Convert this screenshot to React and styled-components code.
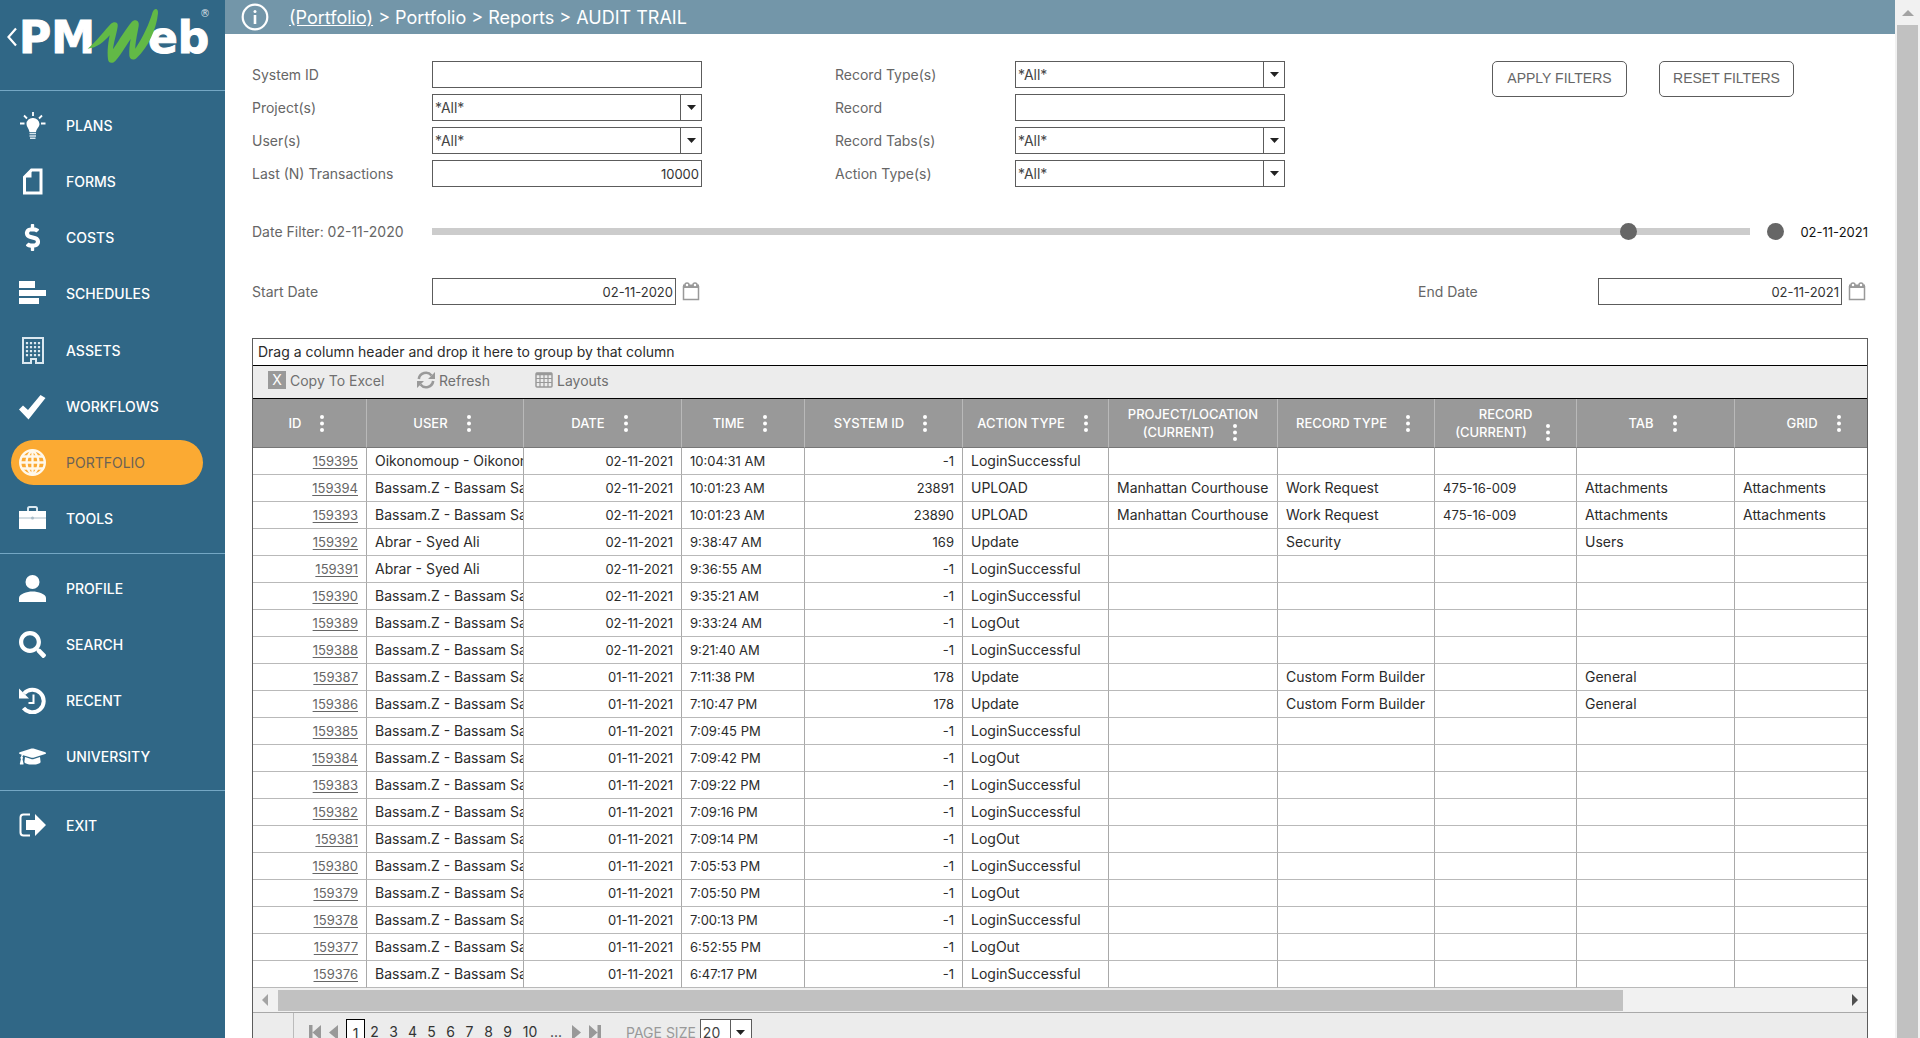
import React from "react";
import styled, { createGlobalStyle, css } from "styled-components";
import { FaDollarSign, FaSearch, FaGraduationCap } from "react-icons/fa";

const GlobalStyle = createGlobalStyle`
  *, *::before, *::after { box-sizing: border-box; }
  body {
    margin: 0;
    font-family: Inter, "Liberation Sans", sans-serif;
    font-size: 14px;
    color: #2b2b2b;
    background: #fff;
  }
  button, input, select { font: inherit; color: inherit; margin: 0; }
`;

/* ---------- shell ---------- */

const Shell = styled.div`
  display: flex;
  height: 100vh;
  overflow: hidden;
`;

const Sidebar = styled.aside`
  flex: 0 0 225px;
  background: #306786;
  color: #fff;
`;

const LogoLink = styled.a`
  display: flex;
  height: 90px;
`;

const NavGroup = styled.nav`
  display: grid;
  grid-auto-rows: 1fr;
  align-items: center;
  box-sizing: content-box;
  height: ${(p) => p.$height}px;
  padding: 6px 22px 6px 11px;
  border-top: 1px solid #74a7c4;
`;

const NavLink = styled.a`
  display: flex;
  align-items: center;
  gap: 20px;
  height: 45px;
  padding-left: 8px;
  border-radius: 23px;
  color: #fff;
  font-weight: 500;
  text-decoration: none;
  ${(p) =>
    p.$active &&
    css`
      background: #fbaa33;
      color: #6b6256;
      font-weight: 400;
    `}
  svg {
    width: 27px;
    height: 27px;
  }
`;

const Main = styled.main`
  flex: 1;
  min-width: 0;
  display: flex;
  flex-direction: column;
`;

const TitleBar = styled.header`
  flex: 0 0 34px;
  display: flex;
  align-items: center;
  gap: 20px;
  padding-left: 16px;
  background: #7396a9;
  color: #fff;
  font-size: 18px;
  a { color: inherit; }
`;

const Trail = styled.span`
  white-space: pre;
`;

const Content = styled.div`
  flex: 1;
  min-height: 0;
  padding: 27px 27px 0;
`;

const PageScroll = styled.div`
  flex: 0 0 25px;
  display: flex;
  flex-direction: column;
  align-items: center;
  background: #f1f1f1;
  svg { flex: 0 0 25px; width: 12px; }
`;

const PageThumb = styled.div`
  flex: 1;
  width: 21px;
  background: #c1c1c1;
`;

/* ---------- filters ---------- */

const Filters = styled.form`
  color: #666;
`;

const FilterGrid = styled.div`
  display: grid;
  grid-template-columns: minmax(0, 583px) minmax(0, 583px) 1fr;
`;

const FieldColumn = styled.div`
  display: grid;
  gap: 6px;
  align-content: start;
`;

const Field = styled.div`
  display: grid;
  grid-template-columns: 180px 270px;
  align-items: center;
`;

const boxed = css`
  height: 27px;
  border: 1px solid #5c5c5c;
  background: #fff;
`;

const TextInput = styled.input`
  ${boxed}
  width: 100%;
  min-width: 0;
  padding: 0 2px;
  outline: 0;
  border-radius: 0;
  color: #333;
  font-size: 13px;
  text-align: ${(p) => (p.$right ? "right" : "left")};
`;

const SelectFrame = styled.div`
  ${boxed}
  display: flex;
  width: ${(p) => (p.$width ? p.$width + "px" : "100%")};
`;

const Select = styled.select`
  flex: 1;
  min-width: 0;
  appearance: none;
  border: 0;
  border-radius: 0;
  outline: 0;
  padding: 0 2px;
  background: transparent;
  color: #444;
`;

const SelectArrow = styled.span`
  flex: 0 0 21px;
  display: flex;
  align-items: center;
  justify-content: center;
  border-left: 1px solid #5c5c5c;
`;

const Actions = styled.div`
  display: flex;
  justify-content: flex-end;
  align-items: flex-start;
  gap: 32px;
  padding-right: 74px;
`;

const ActionButton = styled.button`
  width: 135px;
  height: 36px;
  padding: 0 0 2px;
  border: 1px solid #5c5c5c;
  border-radius: 5px;
  background: #fff;
  color: #666;
  font-family: "Liberation Sans", Arial, sans-serif;
  font-size: 14px;
  white-space: nowrap;
`;

const SliderRow = styled.div`
  display: flex;
  align-items: center;
  height: 27px;
  margin-top: 31px;
`;

const SliderLabel = styled.label`
  flex: 0 0 180px;
`;

const Range = styled.input`
  appearance: none;
  flex: ${(p) => (p.$end ? "0 0 17px" : "1")};
  min-width: 0;
  width: 17px;
  height: 17px;
  margin: 0;
  margin-left: ${(p) => (p.$end ? 17 : 0)}px;
  background: transparent;
  &::-webkit-slider-runnable-track {
    height: 7px;
    background: ${(p) => (p.$end ? "transparent" : "#ccc")};
  }
  &::-webkit-slider-thumb {
    appearance: none;
    width: 17px;
    height: 17px;
    margin-top: -5px;
    border-radius: 50%;
    background: #666;
  }
`;

const SliderEnd = styled.output`
  flex: 0 0 84px;
  text-align: right;
  font-size: 13px;
  color: #111;
`;

const DateGrid = styled(FilterGrid)`
  margin-top: 33px;
`;

const DateField = styled.div`
  display: grid;
  grid-template-columns: 180px 244px 24px;
  align-items: center;
`;

const IconButton = styled.button`
  display: flex;
  justify-content: flex-end;
  padding: 0;
  border: 0;
  background: none;
  svg { flex: none; }
`;

/* ---------- grid ---------- */

const GridPanel = styled.section`
  margin-top: 33px;
  border: 1px solid #5c5c5c;
`;

const GroupHint = styled.div`
  height: 27px;
  line-height: 26px;
  padding-left: 5px;
  border-bottom: 1px solid #000;
`;

const Toolbar = styled.div`
  display: flex;
  align-items: center;
  height: 33px;
  padding: 0 0 4px 15px;
  border-bottom: 1px solid #000;
  background: #ececec;
`;

const ToolButton = styled.button`
  display: flex;
  align-items: center;
  gap: 4px;
  min-width: ${(p) => p.$width}px;
  padding: 0;
  border: 0;
  background: none;
  color: #707070;
`;

const ExcelMark = styled.span`
  width: 18px;
  height: 18px;
  line-height: 18px;
  background: #999;
  color: #fff;
  font-size: 14px;
  text-align: center;
`;

const TableClip = styled.div`
  overflow: hidden;
`;

const Table = styled.table`
  width: 1646px;
  table-layout: fixed;
  border-collapse: separate;
  border-spacing: 0;
`;

const HeadCell = styled.th`
  height: 49px;
  padding: 0;
  border-right: 1px solid #b9b9b9;
  border-bottom: 1px solid #777;
  background: #999;
  color: #fff;
  font-size: 13px;
  line-height: 18px;
  font-weight: 500;
  text-align: center;
  white-space: nowrap;
`;

const MenuButton = styled.button`
  width: 16px;
  height: 18px;
  margin-left: 13px;
  padding: 0;
  border: 0;
  background: none;
  vertical-align: top;
  svg { display: block; margin: 1px auto 0; }
`;

const Cell = styled.td`
  height: 27px;
  padding: ${(p) => (p.$tight ? "0 0 0 8px" : "0 8px")};
  border-right: 1px solid #a9a9a9;
  border-bottom: 1px solid #b9b9b9;
  line-height: 20px;
  font-size: ${(p) => (p.$numeric ? 13 : 14)}px;
  overflow: hidden;
  white-space: nowrap;
  text-align: ${(p) => (p.$right ? "right" : "left")};
  a {
    color: #666;
    text-underline-offset: 2px;
  }
`;

const TableScroll = styled.div`
  display: flex;
  align-items: center;
  height: 25px;
  background: #f1f1f1;
  border-bottom: 1px solid #a9a9a9;
  svg { flex: 0 0 25px; height: 12px; }
`;

const ScrollLane = styled.div`
  flex: 1;
`;

const TableThumb = styled.div`
  width: 86%;
  height: 21px;
  background: #c1c1c1;
`;

const Pager = styled.div`
  display: flex;
  height: 40px;
  background: #ececec;
  color: #333;
`;

const PagerGutter = styled.div`
  flex: 0 0 41px;
  border-right: 1px solid #bbb;
`;

const PagerBody = styled.div`
  display: flex;
  align-items: center;
  padding: 0 0 2px 14px;
`;

const PagerStep = styled.button`
  display: flex;
  width: 19px;
  padding: 0;
  border: 0;
  background: none;
  svg { flex: none; }
`;

const PageLink = styled.a`
  min-width: ${(p) => (p.$wide ? 26 : 19)}px;
  height: 27px;
  line-height: 26px;
  text-align: center;
  text-decoration: none;
  color: #333;
  ${(p) =>
    p.$current &&
    css`
      border: 1px solid #000;
      background: #fff;
      line-height: 27px;
    `}
`;

const PageSizeLabel = styled.label`
  margin: 0 4px 0 19px;
  color: #999;
  font-size: 14px;
`;

/* ---------- drawings ---------- */

const Caret = () => (
  <svg width="9" height="5" viewBox="0 0 9 5" aria-hidden="true">
    <path d="M0 0h9L4.500 5z" fill="#222" />
  </svg>
);

const Kebab = () => (
  <svg width="4" height="17" viewBox="0 0 4 17" fill="#fff" aria-hidden="true">
    <circle cx="2" cy="2" r="2" />
    <circle cx="2" cy="8.500" r="2" />
    <circle cx="2" cy="15" r="2" />
  </svg>
);

const CalendarIcon = () => (
  <svg width="18" height="19" viewBox="0 0 18 19" aria-hidden="true">
    <path d="M1.500 4v13.500h15V4" fill="none" stroke="#999" strokeWidth="1.500" />
    <path d="M1 2.500h16V6H1z" fill="#999" />
    <circle cx="5" cy="3" r="2" fill="#fff" stroke="#999" strokeWidth="1.500" />
    <circle cx="13" cy="3" r="2" fill="#fff" stroke="#999" strokeWidth="1.500" />
  </svg>
);

const Logo = () => (
  <svg width="225" height="90" viewBox="0 0 225 90" role="img" aria-label="PMWeb">
    <path d="M16 28.500 8.500 37 16 45.500" fill="none" stroke="#fff" strokeWidth="2.200" />
    <g fill="#fff" fontFamily="DejaVu Sans, sans-serif" fontWeight="700">
      <g stroke="#fff" strokeWidth="1">
        <text x="19" y="53" fontSize="44">PM</text>
        <text x="148" y="53" fontSize="44">eb</text>
      </g>
      <text x="200" y="17" fontSize="10" fontWeight="400" opacity=".8">®</text>
    </g>
    <path
      transform="scale(.33333)"
      fill="#62b946"
      d="M263 146C290 124 315 90 332 72c10-9 24-6 21 8-5 28-12 48-14 68 20-30 40-64 56-82 10-10 24-4 21 12-5 28-10 52-10 68 24-36 42-76 52-110 5-12 17-13 16 4-4 46-30 104-64 134-10 9-21 4-22-7-1-16 1-34 4-50-18 26-32 52-46 66-9 9-21 7-22-5-3-26 1-52 5-72-18 20-38 38-66 40z"
    />
  </svg>
);

const BulbIcon = () => (
  <svg viewBox="0 0 27 27" fill="#fff" aria-hidden="true">
    <path d="M14 6a6 6 0 0 0-6.500 6c0 3 2.500 4.500 3 8h6.500c.5-3.500 3.500-5 3.500-8A6.300 6.300 0 0 0 14 6z" />
    <path d="M10.500 21.500h6.500M10.500 24h6.500M11 26.300h5.500" stroke="#d7e5ee" strokeWidth="1.500" />
    <path d="M14 0v4M5 3.500l3 3M23 3.500l-3 3M1 11.500h4.500M22 11.500h4.500" stroke="#fff" strokeWidth="1.800" />
  </svg>
);

const FormIcon = () => (
  <svg viewBox="0 0 27 27" aria-hidden="true">
    <path d="M12.500 2H22v23H5.500V9z" fill="none" stroke="#fff" strokeWidth="3" />
    <path d="M4 9.500 12.500 1v8.500z" fill="#fff" />
  </svg>
);

const ScheduleIcon = () => (
  <svg viewBox="0 0 27 27" fill="#fff" aria-hidden="true">
    <path d="M0 1h16v7H0zM0 10h27v6H0zM0 18h20v6H0z" />
  </svg>
);

const BuildingIcon = () => (
  <svg viewBox="0 0 27 27" aria-hidden="true">
    <path d="M4 1h20v25h-7v-4h-5v4H4z" fill="none" stroke="#dbe8f0" strokeWidth="2" />
    <path d="M8 5v15M12 5v15M16 5v15M20 5v15" stroke="#dbe8f0" strokeWidth="2.200" strokeDasharray="2.200 1.800" />
  </svg>
);

const CheckIcon = () => (
  <svg viewBox="0 0 27 27" fill="#fff" aria-hidden="true">
    <path d="M0 16.500 4 12.500l5 4.500L21.500 2l5 3L9.500 26.500z" />
  </svg>
);

const GlobeIcon = () => (
  <svg viewBox="0 0 27 27" fill="none" aria-hidden="true">
    <circle cx="13.500" cy="13.500" r="12.300" stroke="#fff8ea" strokeWidth="2.400" />
    <path
      d="M13.500 1v25M13.500 1c-8 7-8 18 0 25M13.500 1c8 7 8 18 0 25M1 13.500h25M3 7.500h21M3 19.500h21"
      stroke="#fff8ea"
      strokeWidth="2.300"
    />
  </svg>
);

const BriefcaseIcon = () => (
  <svg viewBox="0 0 27 27" aria-hidden="true">
    <path d="M9 6V3.500q0-1.500 1.500-1.500h6q1.500 0 1.500 1.500V6" fill="none" stroke="#dbe8f0" strokeWidth="2" />
    <path d="M0 6h27v18H0z" fill="#fff" />
    <path d="M0 13h27" stroke="#a9bcc8" strokeWidth="1" />
    <circle cx="13.500" cy="13" r="1.500" fill="#a9bcc8" />
  </svg>
);

const PersonIcon = () => (
  <svg viewBox="0 0 27 27" fill="#fff" aria-hidden="true">
    <circle cx="13.500" cy="7" r="7" />
    <path d="M0 27v-4c0-4 8-6.500 13.500-6.500S27 19 27 23v4z" />
  </svg>
);

const RecentIcon = () => (
  <svg viewBox="0 0 27 27" fill="none" stroke="#fff" aria-hidden="true">
    <path d="M5 6.500A11.300 11.300 0 1 1 4.500 21" strokeWidth="4" />
    <path d="M0 1.500v10h10z" fill="#fff" stroke="none" />
    <path d="M14.500 7.500V16H9.500" strokeWidth="2" />
  </svg>
);

const ExitIcon = () => (
  <svg viewBox="0 0 27 27" aria-hidden="true">
    <path d="M11 2.500H4.500Q1.500 2.500 1.500 5.500v15q0 3 3 3H11" fill="none" stroke="#fff" strokeWidth="2" />
    <path d="M7 8h9V2l11 11-11 11v-6H7z" fill="#fff" />
  </svg>
);

const InfoIcon = () => (
  <svg width="28" height="28" viewBox="0 0 28 28" fill="none" stroke="#fff" aria-hidden="true">
    <circle cx="14" cy="14" r="12.300" strokeWidth="2.200" />
    <path d="M14 12v9" strokeWidth="2.600" />
    <circle cx="14" cy="8.500" r="1.500" fill="#fff" stroke="none" />
  </svg>
);

const RefreshIcon = () => (
  <svg width="18" height="18" viewBox="0 0 18 18" aria-hidden="true">
    <path d="M1.800 8A7.200 7.200 0 0 1 14.500 4.500M16.200 10A7.200 7.200 0 0 1 3.500 13.500" fill="none" stroke="#999" strokeWidth="2.600" />
    <path d="M18 1v7h-7zM0 17v-7h7z" fill="#999" />
  </svg>
);

const LayoutIcon = () => (
  <svg width="18" height="16" viewBox="0 0 18 16" fill="none" stroke="#999" aria-hidden="true">
    <rect x="1" y="1" width="16" height="14" rx="1" strokeWidth="1.500" />
    <path d="M1 2h16" strokeWidth="2.500" />
    <path d="M1 6.500h16M1 10.500h16M5 2v13M9 2v13M13 2v13" strokeWidth="1.200" />
  </svg>
);

const StepIcon = ({ back, edge }) => (
  <svg width="14" height="15" viewBox="0 0 14 15" fill="#999" aria-hidden="true">
    <g transform={back ? "matrix(-1 0 0 1 14 0)" : undefined}>
      <path d={edge ? "M1 0l8.500 7.500L1 15zM9.500 0H13v15H9.500z" : "M3 0l9 7.500L3 15z"} />
    </g>
  </svg>
);

/* ---------- data ---------- */

const NAV = [
  {
    name: "Modules",
    height: 450,
    items: [
      ["PLANS", BulbIcon],
      ["FORMS", FormIcon],
      ["COSTS", FaDollarSign],
      ["SCHEDULES", ScheduleIcon],
      ["ASSETS", BuildingIcon],
      ["WORKFLOWS", CheckIcon],
      ["PORTFOLIO", GlobeIcon],
      ["TOOLS", BriefcaseIcon],
    ],
  },
  {
    name: "User",
    height: 224,
    items: [
      ["PROFILE", PersonIcon],
      ["SEARCH", FaSearch],
      ["RECENT", RecentIcon],
      ["UNIVERSITY", FaGraduationCap],
    ],
  },
  { name: "Session", height: 56, items: [["EXIT", ExitIcon]] },
];

const LEFT_FIELDS = [
  { id: "system-id", label: "System ID" },
  { id: "projects", label: "Project(s)", select: true },
  { id: "users", label: "User(s)", select: true },
  { id: "last-n", label: "Last (N) Transactions", value: "10000", right: true },
];

const RIGHT_FIELDS = [
  { id: "record-types", label: "Record Type(s)", select: true },
  { id: "record", label: "Record" },
  { id: "record-tabs", label: "Record Tabs(s)", select: true },
  { id: "action-types", label: "Action Type(s)", select: true },
];

const COLUMNS = [
  { title: ["ID"], width: 114, right: true, numeric: true },
  { title: ["USER"], width: 157, tight: true },
  { title: ["DATE"], width: 158, right: true, numeric: true },
  { title: ["TIME"], width: 123, numeric: true },
  { title: ["SYSTEM ID"], width: 158, right: true, numeric: true },
  { title: ["ACTION TYPE"], width: 146 },
  { title: ["PROJECT/LOCATION", "(CURRENT)"], width: 169, tight: true },
  { title: ["RECORD TYPE"], width: 157, tight: true },
  { title: ["RECORD", "(CURRENT)"], width: 142, numeric: true },
  { title: ["TAB"], width: 158 },
  { title: ["GRID"], width: 164 },
];

const B = "Bassam.Z - Bassam Samman";
const A = "Abrar - Syed Ali";
const D2 = "02-11-2021";
const D1 = "01-11-2021";
const IN = "LoginSuccessful";

const ROWS = [
  ["159395", "Oikonomoup - Oikonomou", D2, "10:04:31 AM", "-1", IN],
  ["159394", B, D2, "10:01:23 AM", "23891", "UPLOAD", "Manhattan Courthouse", "Work Request", "475-16-009", "Attachments", "Attachments"],
  ["159393", B, D2, "10:01:23 AM", "23890", "UPLOAD", "Manhattan Courthouse", "Work Request", "475-16-009", "Attachments", "Attachments"],
  ["159392", A, D2, "9:38:47 AM", "169", "Update", "", "Security", "", "Users"],
  ["159391", A, D2, "9:36:55 AM", "-1", IN],
  ["159390", B, D2, "9:35:21 AM", "-1", IN],
  ["159389", B, D2, "9:33:24 AM", "-1", "LogOut"],
  ["159388", B, D2, "9:21:40 AM", "-1", IN],
  ["159387", B, D1, "7:11:38 PM", "178", "Update", "", "Custom Form Builder", "", "General"],
  ["159386", B, D1, "7:10:47 PM", "178", "Update", "", "Custom Form Builder", "", "General"],
  ["159385", B, D1, "7:09:45 PM", "-1", IN],
  ["159384", B, D1, "7:09:42 PM", "-1", "LogOut"],
  ["159383", B, D1, "7:09:22 PM", "-1", IN],
  ["159382", B, D1, "7:09:16 PM", "-1", IN],
  ["159381", B, D1, "7:09:14 PM", "-1", "LogOut"],
  ["159380", B, D1, "7:05:53 PM", "-1", IN],
  ["159379", B, D1, "7:05:50 PM", "-1", "LogOut"],
  ["159378", B, D1, "7:00:13 PM", "-1", IN],
  ["159377", B, D1, "6:52:55 PM", "-1", "LogOut"],
  ["159376", B, D1, "6:47:17 PM", "-1", IN],
];

const PAGES = ["1", "2", "3", "4", "5", "6", "7", "8", "9", "10", "..."];

/* ---------- page ---------- */

const FilterField = ({ id, label, select, value, right }) => (
  <Field>
    <label htmlFor={id}>{label}</label>
    {select ? (
      <SelectFrame>
        <Select id={id}>
          <option>*All*</option>
        </Select>
        <SelectArrow><Caret /></SelectArrow>
      </SelectFrame>
    ) : (
      <TextInput id={id} defaultValue={value} $right={right} />
    )}
  </Field>
);

const DatePicker = ({ id, label, value }) => (
  <DateField>
    <label htmlFor={id}>{label}</label>
    <TextInput id={id} defaultValue={value} $right />
    <IconButton type="button" aria-label={`Pick ${label}`}><CalendarIcon /></IconButton>
  </DateField>
);

export default function App() {
  return (
    <Shell>
      <GlobalStyle />
      <Sidebar>
        <LogoLink href="#home"><Logo /></LogoLink>
        {NAV.map((group) => (
          <NavGroup key={group.name} aria-label={group.name} $height={group.height}>
            {group.items.map(([text, Icon]) => (
              <NavLink key={text} href={`#${text.toLowerCase()}`} $active={text === "PORTFOLIO"}>
                <Icon />
                {text}
              </NavLink>
            ))}
          </NavGroup>
        ))}
      </Sidebar>

      <Main>
        <TitleBar>
          <InfoIcon />
          <Trail>
            <a href="#portfolio">(Portfolio)</a>
            {" > Portfolio > Reports > AUDIT TRAIL"}
          </Trail>
        </TitleBar>

        <Content>
          <Filters onSubmit={(e) => e.preventDefault()}>
            <FilterGrid>
              <FieldColumn>
                {LEFT_FIELDS.map((f) => <FilterField key={f.id} {...f} />)}
              </FieldColumn>
              <FieldColumn>
                {RIGHT_FIELDS.map((f) => <FilterField key={f.id} {...f} />)}
              </FieldColumn>
              <Actions>
                <ActionButton type="submit">APPLY FILTERS</ActionButton>
                <ActionButton type="reset">RESET FILTERS</ActionButton>
              </Actions>
            </FilterGrid>

            <SliderRow>
              <SliderLabel htmlFor="range-start">Date Filter: 02-11-2020</SliderLabel>
              <Range id="range-start" type="range" min="0" max="1000" defaultValue="913" />
              <Range type="range" aria-label="Date filter end" $end />
              <SliderEnd>02-11-2021</SliderEnd>
            </SliderRow>

            <DateGrid>
              <DatePicker id="start-date" label="Start Date" value="02-11-2020" />
              <span />
              <DatePicker id="end-date" label="End Date" value="02-11-2021" />
            </DateGrid>
          </Filters>

          <GridPanel>
            <GroupHint>Drag a column header and drop it here to group by that column</GroupHint>
            <Toolbar>
              <ToolButton $width={149}><ExcelMark>X</ExcelMark>Copy To Excel</ToolButton>
              <ToolButton $width={118}><RefreshIcon />Refresh</ToolButton>
              <ToolButton $width={80}><LayoutIcon />Layouts</ToolButton>
            </Toolbar>
            <TableClip>
              <Table>
                <colgroup>
                  {COLUMNS.map((c, i) => <col key={i} width={c.width} />)}
                </colgroup>
                <thead>
                  <tr>
                    {COLUMNS.map((c, i) => (
                      <HeadCell key={i} scope="col">
                        {c.title[0]}
                        {c.title[1] && <><br />{c.title[1]}</>}
                        <MenuButton aria-label={`${c.title.join(" ")} column menu`}><Kebab /></MenuButton>
                      </HeadCell>
                    ))}
                  </tr>
                </thead>
                <tbody>
                  {ROWS.map((row) => (
                    <tr key={row[0]}>
                      {COLUMNS.map((c, i) => (
                        <Cell key={i} $right={c.right} $tight={c.tight} $numeric={c.numeric}>
                          {i === 0 ? <a href={`#record-${row[0]}`}>{row[0]}</a> : row[i]}
                        </Cell>
                      ))}
                    </tr>
                  ))}
                </tbody>
              </Table>
            </TableClip>
            <TableScroll>
              <svg viewBox="0 0 25 12" aria-hidden="true"><path d="M9 6l6-6v12z" fill="#a3a3a3" /></svg>
              <ScrollLane><TableThumb /></ScrollLane>
              <svg viewBox="0 0 25 12" aria-hidden="true"><path d="M16 6l-6-6v12z" fill="#505050" /></svg>
            </TableScroll>
            <Pager>
              <PagerGutter />
              <PagerBody>
                <PagerStep aria-label="First page"><StepIcon back edge /></PagerStep>
                <PagerStep aria-label="Previous page"><StepIcon back /></PagerStep>
                {PAGES.map((p) => (
                  <PageLink key={p} href={`#page-${p}`} $current={p === "1"} $wide={p.length > 1}>{p}</PageLink>
                ))}
                <PagerStep aria-label="Next page"><StepIcon /></PagerStep>
                <PagerStep aria-label="Last page"><StepIcon edge /></PagerStep>
                <PageSizeLabel htmlFor="page-size">PAGE SIZE</PageSizeLabel>
                <SelectFrame $width={52}>
                  <Select id="page-size"><option>20</option></Select>
                  <SelectArrow><Caret /></SelectArrow>
                </SelectFrame>
              </PagerBody>
            </Pager>
          </GridPanel>
        </Content>
      </Main>

      <PageScroll>
        <svg viewBox="0 0 12 25" aria-hidden="true"><path d="M0 16l6-6 6 6z" fill="#a3a3a3" /></svg>
        <PageThumb />
      </PageScroll>
    </Shell>
  );
}
